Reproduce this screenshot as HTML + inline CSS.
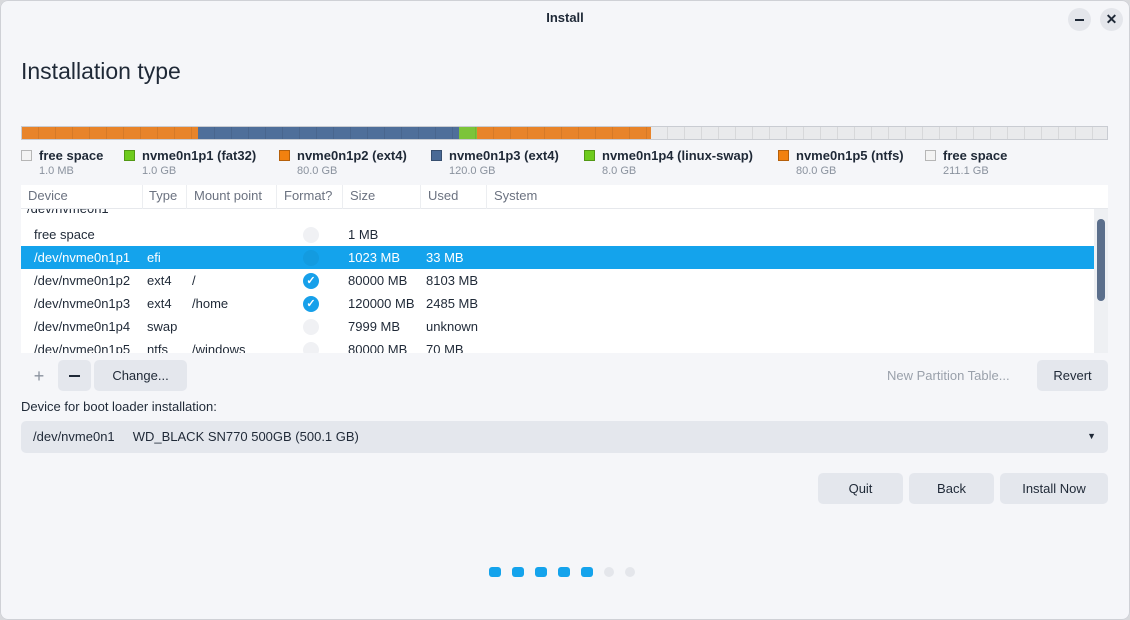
<!DOCTYPE html>
<html><head><style>
*{margin:0;padding:0;box-sizing:border-box}
body{width:1130px;height:620px;background:#d8d9dc;font-family:"Liberation Sans",sans-serif;color:#1f2937;font-size:13px;position:relative;overflow:hidden}
.win{position:absolute;left:0;top:0;width:1130px;height:620px;background:#f5f6f9;box-shadow:inset 0 0 0 1px #cfd1d6;border-radius:8px}
.a{position:absolute}
.bar{left:21px;top:126px;height:14px;width:1087px;display:flex;border:1px solid #c9ccd2}
.bar div{height:100%;background-image:repeating-linear-gradient(90deg,transparent 0 16px,rgba(0,0,0,.08) 16px 17px)}
.lg{top:148px;font-weight:bold;font-size:13px;color:#1f2937}
.lg i{display:inline-block;width:11px;height:11px;margin-right:7px;vertical-align:-1px;border:1px solid rgba(0,0,0,.25)}
.lg small{display:block;font-weight:normal;font-size:11px;color:#8a929e;margin-left:18px;margin-top:2px}
.th{top:185px;left:21px;width:1087px;height:24px;background:#fff;border-bottom:1px solid #e6e8ec;color:#6b7280}
.th span{position:absolute;padding-left:7px;border-right:1px solid #eceef1;height:24px;top:0;line-height:22px}
.list{left:21px;top:209px;width:1087px;height:144px;background:#fff;overflow:hidden}
.r{position:absolute;left:0;width:1073px;height:23px;line-height:23px}
.r span{position:absolute}
.sel{background:#14a3ec;color:#fff}
.ck{width:16px;height:16px;border-radius:50%;background:#f0f1f4;top:4px;left:282px}
.ok{background:#17a0ea}
.btn{background:#e4e7ed;border-radius:5px;text-align:center;line-height:31px;height:31px;color:#1f2937}
</style></head><body>
<div class="win">
<div class="a" style="left:0;width:1130px;top:10px;text-align:center;font-weight:bold;font-size:13px">Install</div>
<div class="a" style="left:1068px;top:8px;width:23px;height:23px;border-radius:50%;background:#e4e6eb"><div class="a" style="left:7px;top:11px;width:9px;height:2px;background:#1f2937"></div></div>
<div class="a" style="left:1100px;top:8px;width:23px;height:23px;border-radius:50%;background:#e4e6eb;text-align:center;line-height:23px;font-weight:bold;font-size:14px">✕</div>
<div class="a" style="left:21px;top:58px;font-size:23px;color:#1f2937">Installation type</div>
<div class="a bar"><div style="width:176px;background-color:#e8842a"></div><div style="width:261px;background-color:#4f6f9a"></div><div style="width:18px;background-color:#7cc43a"></div><div style="width:174px;background-color:#e8842a"></div><div style="flex:1;background-color:#e9eaec"></div></div>
<div class="a lg" style="left:21px"><i style="background:#f3f3f3"></i>free space<small>1.0 MB</small></div>
<div class="a lg" style="left:124px"><i style="background:#6ecb1d"></i>nvme0n1p1 (fat32)<small>1.0 GB</small></div>
<div class="a lg" style="left:279px"><i style="background:#f2810f"></i>nvme0n1p2 (ext4)<small>80.0 GB</small></div>
<div class="a lg" style="left:431px"><i style="background:#4a6a96"></i>nvme0n1p3 (ext4)<small>120.0 GB</small></div>
<div class="a lg" style="left:584px"><i style="background:#6ecb1d"></i>nvme0n1p4 (linux-swap)<small>8.0 GB</small></div>
<div class="a lg" style="left:778px"><i style="background:#f2810f"></i>nvme0n1p5 (ntfs)<small>80.0 GB</small></div>
<div class="a lg" style="left:925px"><i style="background:#f3f3f3"></i>free space<small>211.1 GB</small></div>
<div class="a th"><span style="left:0;width:122px">Device</span><span style="left:121px;width:45px">Type</span><span style="left:166px;width:90px">Mount point</span><span style="left:256px;width:66px">Format?</span><span style="left:322px;width:78px">Size</span><span style="left:400px;width:66px">Used</span><span style="left:466px;width:100px;border:none">System</span></div>
<div class="a list">
<div class="r" style="top:-12px"><span style="left:6px">/dev/nvme0n1</span></div>
<div class="r" style="top:14px"><span style="left:13px">free space</span><span class="ck"></span><span style="left:327px">1 MB</span></div>
<div class="r sel" style="top:37px;width:1073px"><span style="left:13px">/dev/nvme0n1p1</span><span style="left:126px">efi</span><span class="ck" style="background:#139be0"></span><span style="left:327px">1023 MB</span><span style="left:405px">33 MB</span></div>
<div class="r" style="top:60px"><span style="left:13px">/dev/nvme0n1p2</span><span style="left:126px">ext4</span><span style="left:171px">/</span><span class="ck ok" style="color:#fff;font-size:11px;line-height:16px;text-align:center;font-weight:bold">✓</span><span style="left:327px">80000 MB</span><span style="left:405px">8103 MB</span></div>
<div class="r" style="top:83px"><span style="left:13px">/dev/nvme0n1p3</span><span style="left:126px">ext4</span><span style="left:171px">/home</span><span class="ck ok" style="color:#fff;font-size:11px;line-height:16px;text-align:center;font-weight:bold">✓</span><span style="left:327px">120000 MB</span><span style="left:405px">2485 MB</span></div>
<div class="r" style="top:106px"><span style="left:13px">/dev/nvme0n1p4</span><span style="left:126px">swap</span><span class="ck"></span><span style="left:327px">7999 MB</span><span style="left:405px">unknown</span></div>
<div class="r" style="top:129px"><span style="left:13px">/dev/nvme0n1p5</span><span style="left:126px">ntfs</span><span style="left:171px">/windows</span><span class="ck"></span><span style="left:327px">80000 MB</span><span style="left:405px">70 MB</span></div>
<div class="a" style="left:1073px;top:0;width:14px;height:144px;background:#eef0f3"></div>
<div class="a" style="left:1076px;top:10px;width:8px;height:82px;border-radius:4px;background:#5b6f8c"></div>
</div>
<div class="a" style="left:28px;top:365px;width:22px;text-align:center;font-size:18px;color:#8a929e;line-height:22px">+</div>
<div class="a btn" style="left:58px;top:360px;width:33px"><div class="a" style="left:11px;top:15px;width:11px;height:2px;background:#1f2937"></div></div>
<div class="a btn" style="left:94px;top:360px;width:93px">Change...</div>
<div class="a" style="left:887px;top:368px;color:#9aa1ab">New Partition Table...</div>
<div class="a btn" style="left:1037px;top:360px;width:71px">Revert</div>
<div class="a" style="left:21px;top:399px;color:#1f2937">Device for boot loader installation:</div>
<div class="a btn" style="left:21px;top:421px;width:1087px;height:32px;text-align:left;padding-left:12px">/dev/nvme0n1&nbsp;&nbsp;&nbsp;&nbsp;&nbsp;WD_BLACK SN770 500GB (500.1 GB)<span class="a" style="right:12px;top:0;font-size:9px">▼</span></div>
<div class="a btn" style="left:818px;top:473px;width:85px">Quit</div>
<div class="a btn" style="left:909px;top:473px;width:85px">Back</div>
<div class="a btn" style="left:1000px;top:473px;width:108px">Install Now</div>
<div class="a" style="left:489px;top:567px;display:flex;gap:11px">
<i style="width:12px;height:10px;border-radius:3px;background:#14a3ec"></i><i style="width:12px;height:10px;border-radius:3px;background:#14a3ec"></i><i style="width:12px;height:10px;border-radius:3px;background:#14a3ec"></i><i style="width:12px;height:10px;border-radius:3px;background:#14a3ec"></i><i style="width:12px;height:10px;border-radius:3px;background:#14a3ec"></i><i style="width:10px;height:10px;border-radius:50%;background:#e4e6eb"></i><i style="width:10px;height:10px;border-radius:50%;background:#e4e6eb"></i>
</div>
</div>
</body></html>
